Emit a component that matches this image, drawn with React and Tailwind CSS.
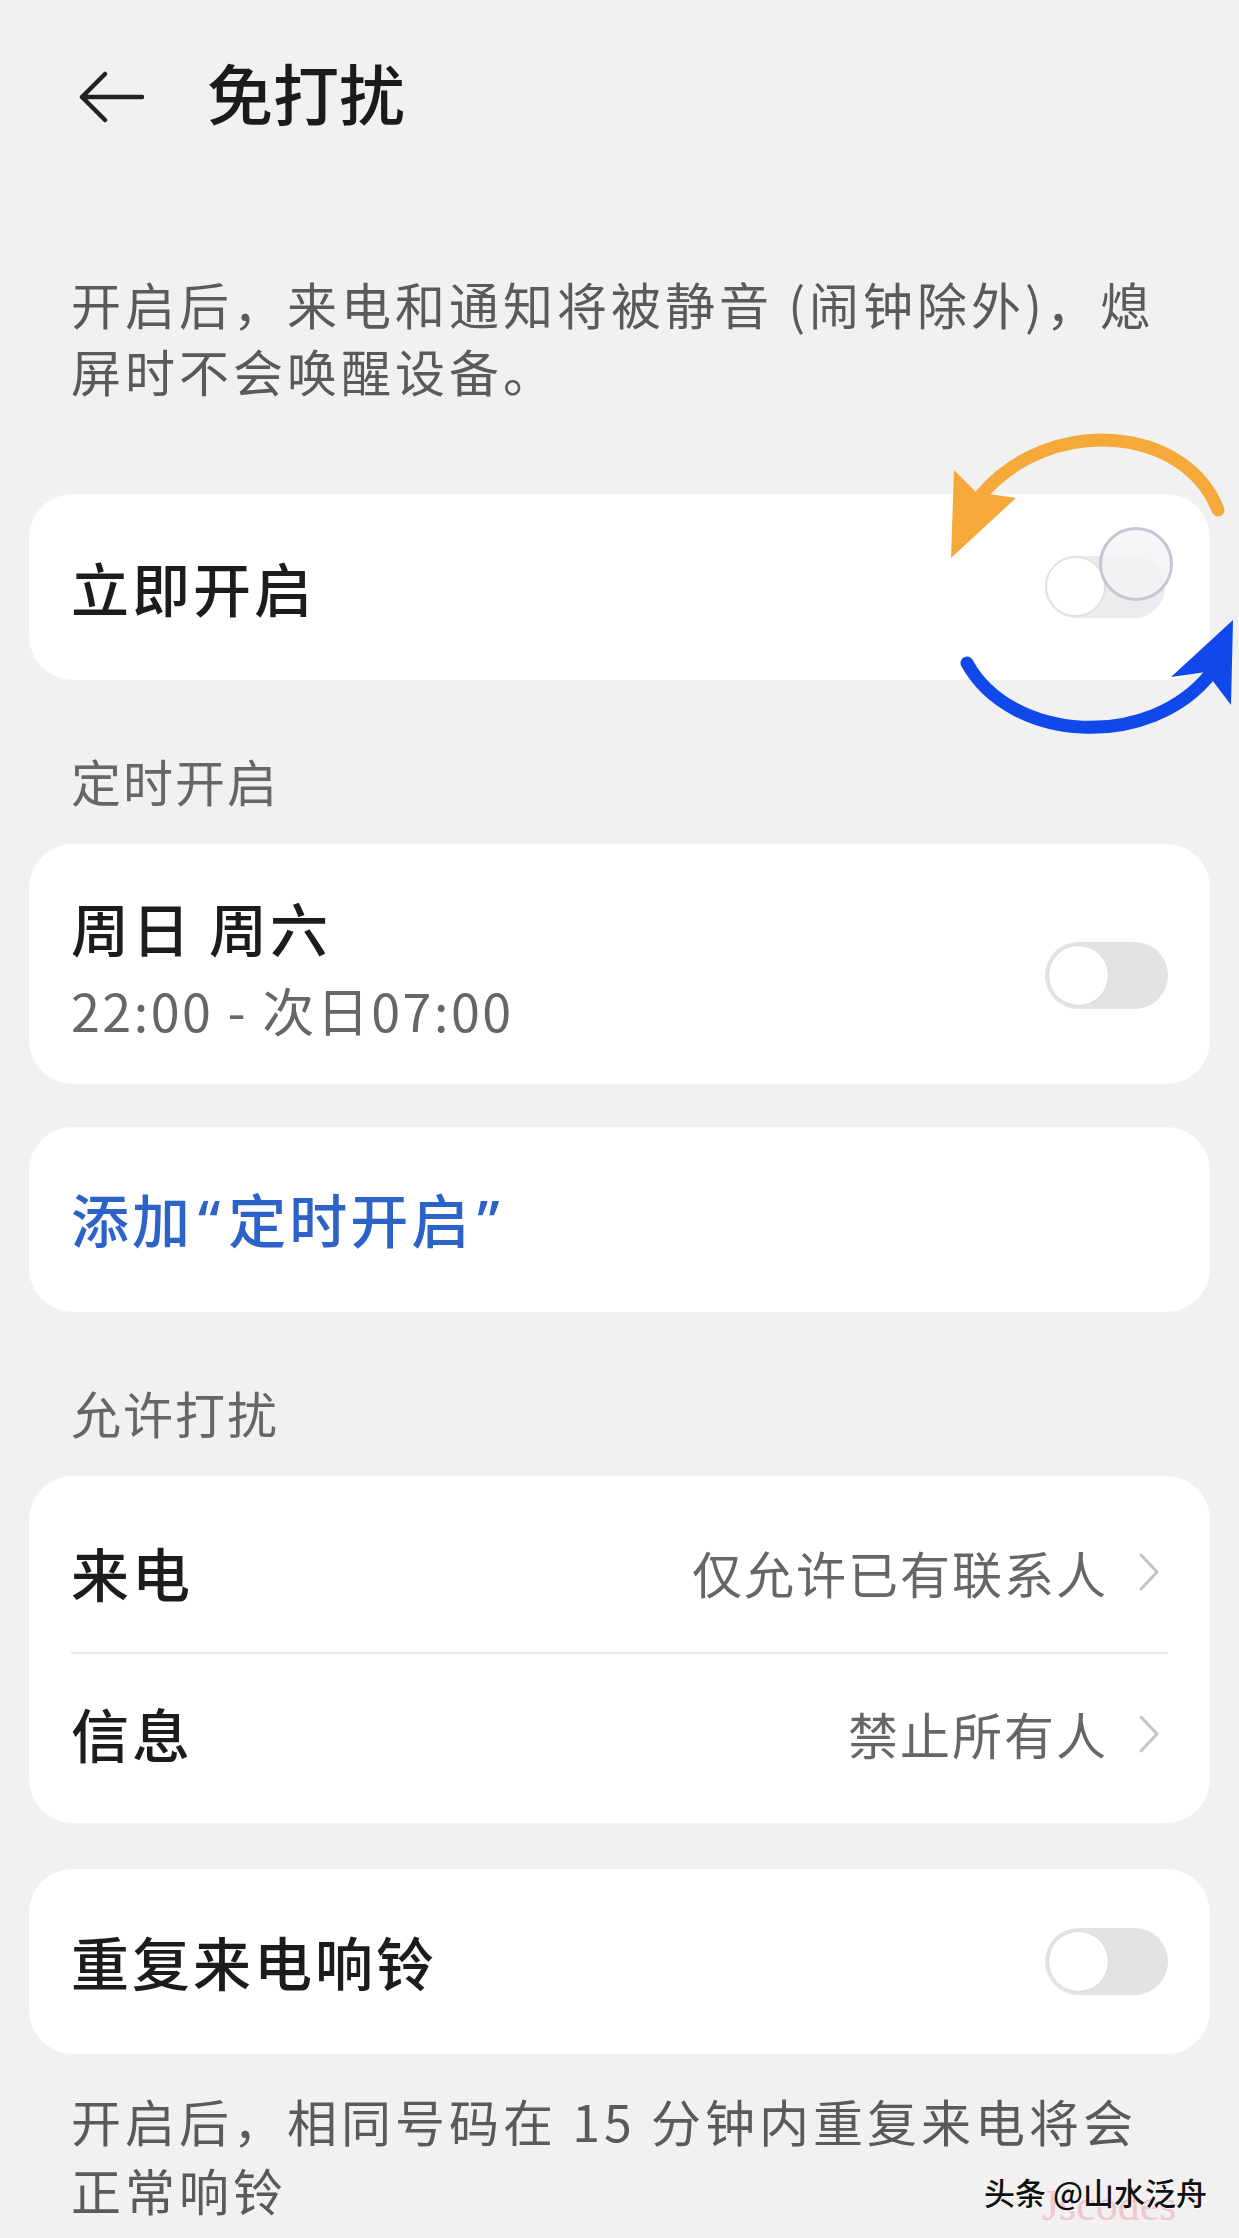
import React from "react";

function Toggle() {
    return (
        <div className="w-[123px] h-[67px] rounded-full bg-[#e3e3e3] flex items-center pl-[3px] shrink-0">
            <div className="w-[61px] h-[61px] rounded-full bg-white border border-[#dadada]" />
        </div>
    );
}

// the first switch is caught mid-flip in the screenshot, so it shows two knobs
function FlippingToggle() {
    return (
        <div className="relative w-[120px] h-[62px] rounded-full bg-[#ececec] shrink-0">
            <div className="absolute left-0 top-0 w-[61px] h-[61px] rounded-full bg-white border-2 border-[#e2e2e2]" />
            <div className="absolute left-[54px] top-[-29px] w-[74px] h-[74px] rounded-full bg-[#f4f4f6]/80 border-[3px] border-[#c6c7d4]" />
        </div>
    );
}

function Chevron() {
    return (
        <svg width="22" height="40" viewBox="0 0 22 40" fill="none" className="shrink-0">
            <path d="M3 3 L19 20 L3 37" stroke="#c4c4c4" strokeWidth="3" strokeLinecap="round" strokeLinejoin="round" />
        </svg>
    );
}

function SectionLabel({ children }) {
    return (
        <div className="pt-[70px] pb-[34px] px-[42px] text-[50px] leading-[60px] tracking-[2px] text-[#666666]">
            {children}
        </div>
    );
}

function FlipArrows() {
    return (
        <svg
            className="absolute left-[930px] top-[420px] pointer-events-none"
            width="309"
            height="330"
            viewBox="0 0 309 330"
            fill="none"
        >
            <path d="M288 90 C255 5 120 -5 52 74" stroke="#f5a93a" strokeWidth="13" strokeLinecap="round" />
            <path d="M24 50 L46 72 L86 78 L21 138 Z" fill="#f5a93a" />
            <path d="M37 243 C80 322 220 332 282 252" stroke="#1148ec" strokeWidth="13" strokeLinecap="round" />
            <path d="M303 200 L241 257 L276 252 L301 285 Z" fill="#1148ec" />
        </svg>
    );
}

export default function App() {
    return (
        <div className="relative w-[1239px] min-h-[2238px] overflow-hidden bg-[#f1f1f1] font-['Noto_Sans_CJK_SC','Noto_Sans',sans-serif]">
            {/* header */}
            <div className="h-[194px] flex items-center pl-[78px]">
                <svg width="66" height="52" viewBox="0 0 66 52" fill="none">
                    <path d="M64 26 H4 M27 3 L4 26 L27 49" stroke="#222222" strokeWidth="4.5" strokeLinecap="round" strokeLinejoin="round" />
                </svg>
                <div className="ml-[63px] mb-[12px] text-[66px] leading-none font-medium text-[#1b1b1b]">免打扰</div>
            </div>

            <p className="mt-[76px] px-[71px] text-[50px] leading-[67px] tracking-[4px] text-[#5a5a5a]">
                开启后，来电和通知将被静音 (闹钟除外)，熄
                <br />
                屏时不会唤醒设备。
            </p>

            <div className="mx-[29px]">
                <div className="mt-[90px] h-[186px] rounded-[44px] bg-white flex items-center justify-between pl-[42px] pr-[45px]">
                    <span className="text-[58px] tracking-[3px] font-medium text-[#1c1c1c]">立即开启</span>
                    <FlippingToggle />
                </div>

                <SectionLabel>定时开启</SectionLabel>

                <div className="h-[240px] rounded-[44px] bg-white flex items-start justify-between pl-[42px] pr-[42px] pt-[47px]">
                    <div className="flex flex-col">
                        <span className="text-[58px] leading-[72px] tracking-[3px] font-medium text-[#1c1c1c]">周日 周六</span>
                        <span className="mt-[11px] text-[52px] leading-[72px] tracking-[2.5px] text-[#666666]">22:00 - 次日07:00</span>
                    </div>
                    <div className="mt-[51px]">
                        <Toggle />
                    </div>
                </div>

                <div className="mt-[43px] h-[185px] rounded-[44px] bg-white flex items-center pl-[42px]">
                    <span className="text-[58px] tracking-[3px] font-medium text-[#2d62c8]">
                        添加<span className="font-['Noto_Sans',sans-serif] px-[5px]">“</span>定时开启<span className="font-['Noto_Sans',sans-serif] px-[5px]">”</span>
                    </span>
                </div>

                <SectionLabel>允许打扰</SectionLabel>

                <div className="rounded-[44px] bg-white px-[42px]">
                    <div className="h-[176px] pt-[16px] flex items-center justify-between">
                        <span className="text-[58px] tracking-[3px] font-medium text-[#1c1c1c]">来电</span>
                        <div className="flex items-center gap-[30px] pr-[8px]">
                            <span className="text-[50px] tracking-[2px] text-[#666666]">仅允许已有联系人</span>
                            <Chevron />
                        </div>
                    </div>
                    <div className="h-[2px] bg-[#e8e8e8]" />
                    <div className="h-[169px] pb-[10px] flex items-center justify-between">
                        <span className="text-[58px] tracking-[3px] font-medium text-[#1c1c1c]">信息</span>
                        <div className="flex items-center gap-[30px] pr-[8px]">
                            <span className="text-[50px] tracking-[2px] text-[#666666]">禁止所有人</span>
                            <Chevron />
                        </div>
                    </div>
                </div>

                <div className="mt-[46px] h-[185px] rounded-[44px] bg-white flex items-center justify-between pl-[42px] pr-[42px]">
                    <span className="text-[58px] tracking-[3px] font-medium text-[#1c1c1c]">重复来电响铃</span>
                    <Toggle />
                </div>

                <p className="mt-[32px] px-[42px] text-[50px] leading-[69px] tracking-[4px] text-[#5a5a5a]">
                    开启后，相同号码在 15 分钟内重复来电将会
                    <br />
                    正常响铃
                </p>
            </div>

            <FlipArrows />

            {/* watermarks */}
            <div className="absolute left-[1042px] top-[2184px] text-[44px] leading-none font-['Liberation_Serif',serif] text-[#f2c6cb]">
                Jscodes
            </div>
            <div className="absolute left-[984px] top-[2174px] text-[31px] leading-[36px] font-medium text-[#111111] [text-shadow:1px_1px_0_#ffffff]">
                头条 @山水泛舟
            </div>
        </div>
    );
}
